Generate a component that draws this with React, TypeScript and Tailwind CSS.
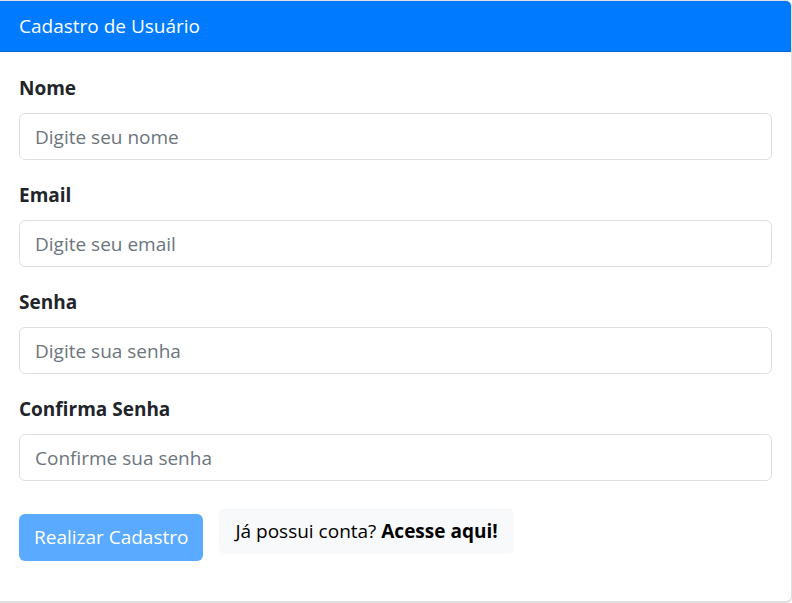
import React from "react";

const fields = [
  { label: "Nome", placeholder: "Digite seu nome", type: "text" },
  { label: "Email", placeholder: "Digite seu email", type: "email" },
  { label: "Senha", placeholder: "Digite sua senha", type: "password" },
  { label: "Confirma Senha", placeholder: "Confirme sua senha", type: "password" },
];

export default function App() {
  return (
    <div
      className="h-[603px] w-[792px] overflow-hidden bg-white text-[#212529]"
      style={{ fontFamily: '"Open Sans", "Noto Sans", sans-serif' }}
    >
      <div className="-ml-[7px] h-[602px] w-[799px] overflow-hidden rounded-[6px] border border-[rgba(0,0,0,0.125)] bg-white shadow-[0_1px_2px_rgba(0,0,0,0.15)]">
        <div className="flex h-[51px] items-center border-b border-[rgba(0,0,0,0.2)] bg-[#007bff] px-[25px] text-[19px] text-white">
          Cadastro de Usuário
        </div>
        <form className="px-[25px] pt-[21px]">
          {fields.map((f) => (
            <div key={f.label} className="mb-[20px]">
              <label className="mb-[10px] block text-[19px] font-bold leading-[30px]">
                {f.label}
              </label>
              <input
                type={f.type}
                placeholder={f.placeholder}
                className="block h-[47px] w-[753px] rounded-[6px] border border-[#dcdfe3] bg-white px-[15px] text-[19px] text-[#495057] placeholder:text-[#6c757d] focus:outline-none"
              />
            </div>
          ))}
          <div className="flex items-start gap-4 pt-[7px]">
            <button
              type="button"
              disabled
              className="mt-[6px] h-[47px] rounded-[6px] bg-[#5aaaff] px-[15px] text-[19px] text-white"
            >
              Realizar Cadastro
            </button>
            <div className="flex h-[46px] items-center rounded-[6px] bg-[#f8f9fa] px-[16px] text-[19px] text-black">
              <span>Já possui conta?&nbsp;</span>
              <a href="#" className="font-bold text-black">
                Acesse aqui!
              </a>
            </div>
          </div>
        </form>
      </div>
    </div>
  );
}
